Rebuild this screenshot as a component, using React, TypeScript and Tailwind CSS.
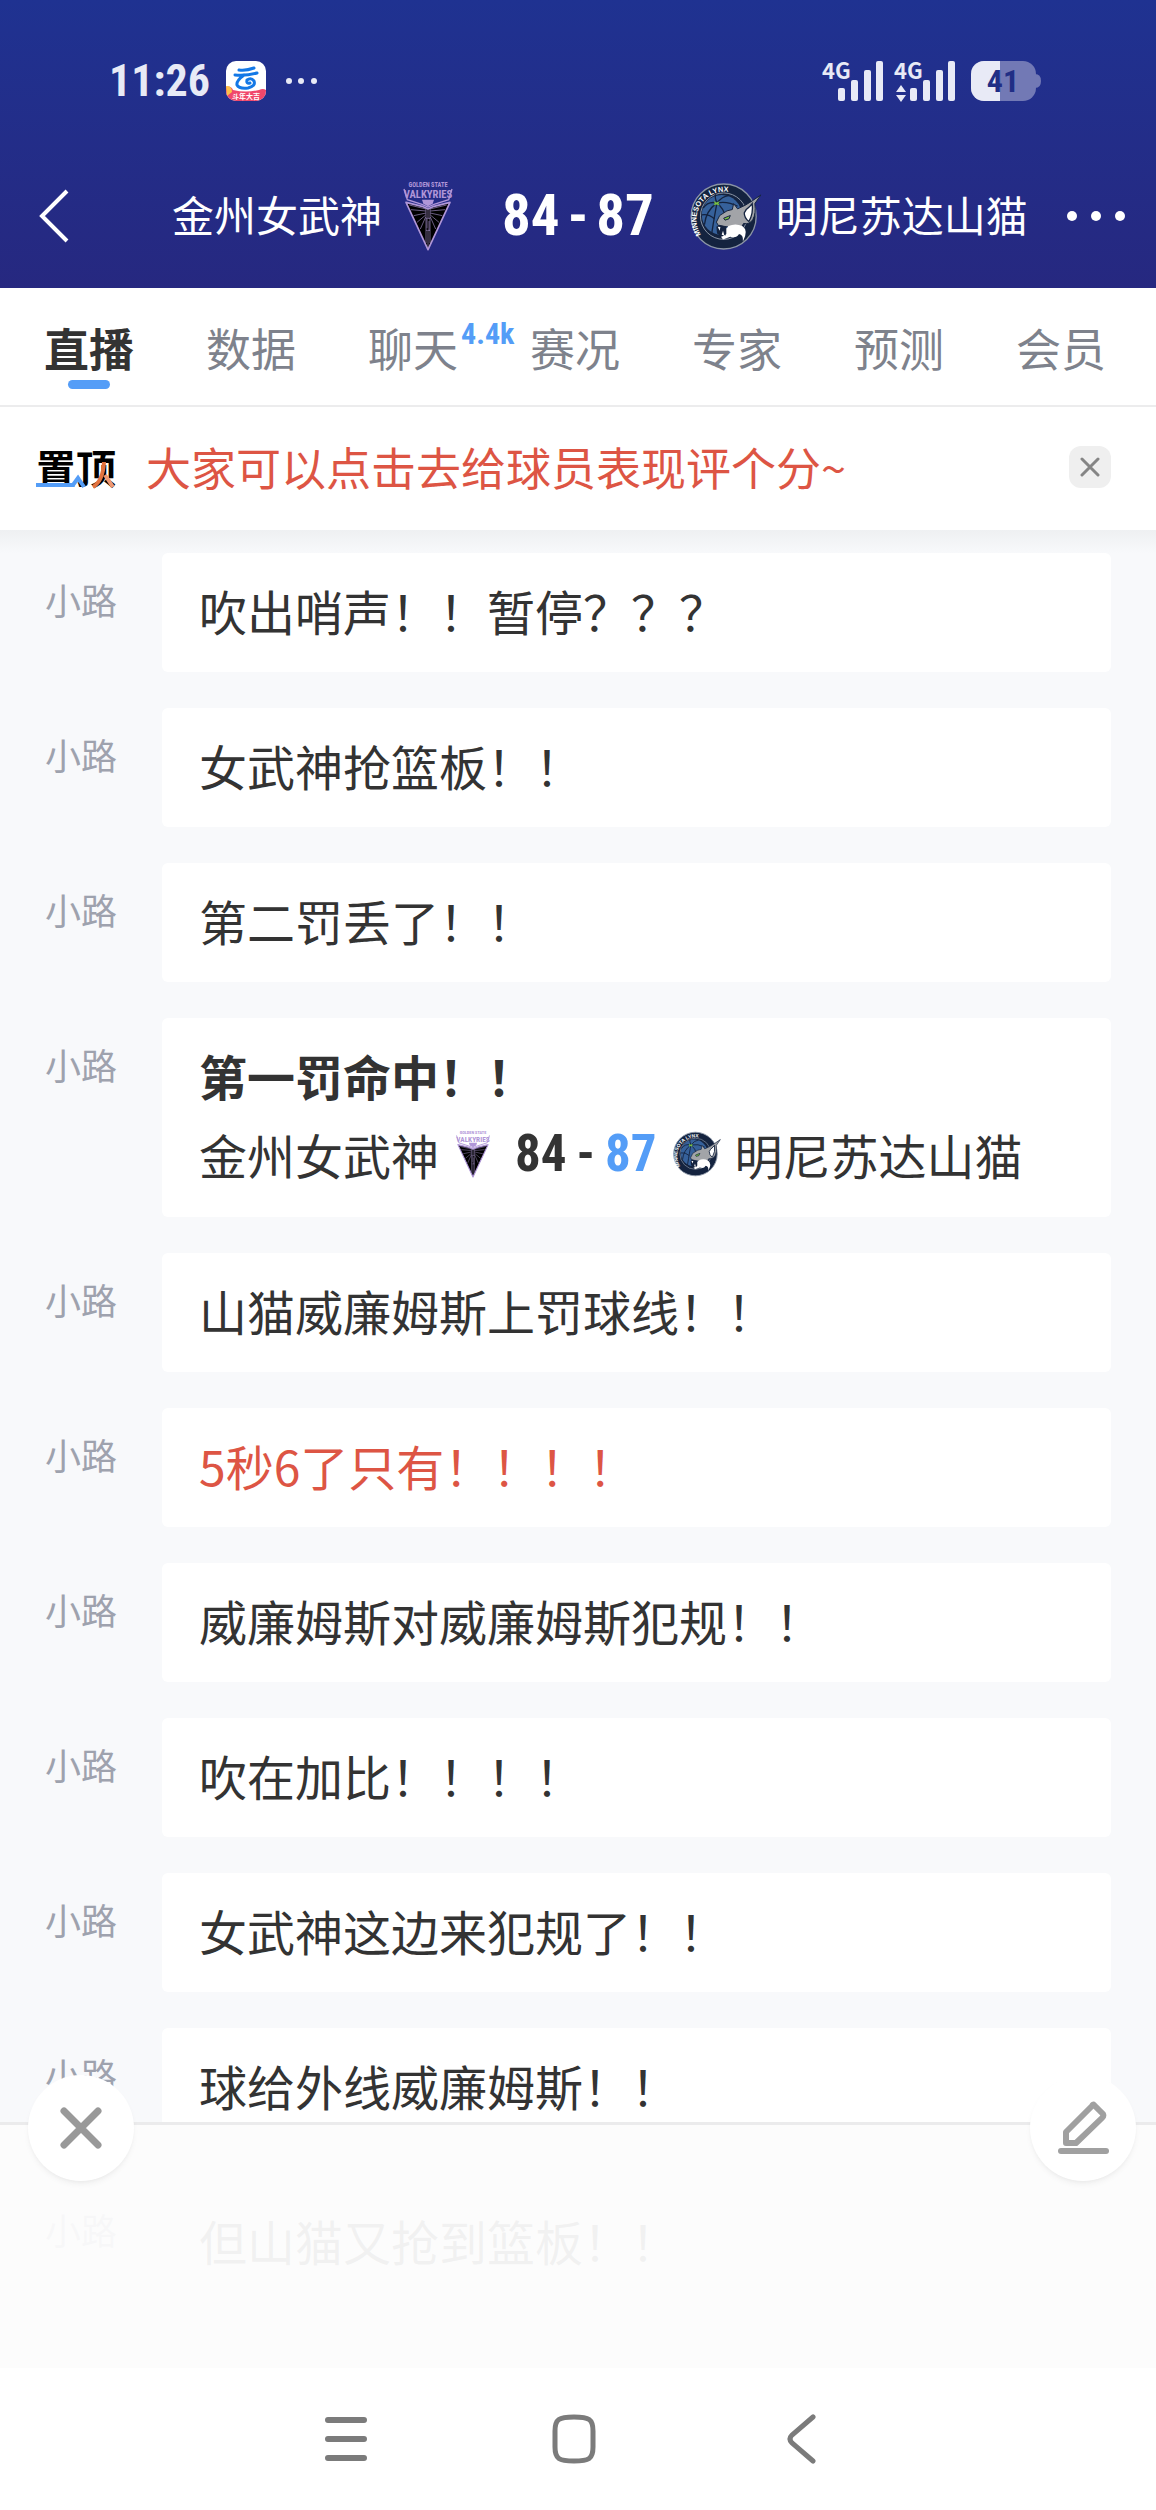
import React from 'react';
import { clsx } from 'clsx';

type Comment = {
  id: number;
  text: string;
  tone?: 'bold' | 'red';
  score?: { home: number; away: number };
};

const HOME_TEAM = '金州女武神';
const AWAY_TEAM = '明尼苏达山猫';

const tabs = [
  { name: '直播' },
  { name: '数据' },
  { name: '聊天', count: '4.4k' },
  { name: '赛况' },
  { name: '专家' },
  { name: '预测' },
  { name: '会员' },
];

const comments: Comment[] = [
  { id: 11, text: '吹出哨声！！暂停？？？' },
  { id: 10, text: '女武神抢篮板！！' },
  { id: 9, text: '第二罚丢了！！' },
  { id: 8, text: '第一罚命中！！', tone: 'bold', score: { home: 84, away: 87 } },
  { id: 7, text: '山猫威廉姆斯上罚球线！！' },
  { id: 6, text: '5秒6了只有！！！！', tone: 'red' },
  { id: 5, text: '威廉姆斯对威廉姆斯犯规！！' },
  { id: 4, text: '吹在加比！！！！' },
  { id: 3, text: '女武神这边来犯规了！！' },
  { id: 2, text: '球给外线威廉姆斯！！' },
  { id: 1, text: '但山猫又抢到篮板！！' },
];

const ValkyriesLogo: React.FC<{ className?: string }> = ({ className }) => (
  <svg viewBox="0 0 156 210" className={className} aria-hidden="true">
    <g fill="#b096d8" fontFamily="'Roboto Condensed', Roboto, sans-serif" fontWeight="700" textAnchor="middle">
      <text x="78" y="18" fontSize="19">GOLDEN STATE</text>
      <text x="78" y="52" fontSize="32">VALKYRIES</text>
    </g>
    <path d="M6 24 L16 56 L60 70 L78 78 L96 70 L140 56 L150 24" fill="none" stroke="#b096d8" strokeWidth="4" />
    <path d="M60 56 H96 L92 68 L78 76 L64 68 Z" fill="#b096d8" />
    <path d="M12 64 L60 76 L78 84 L96 76 L144 64 L78 206 Z" fill="#000" stroke="#b096d8" strokeWidth="5" strokeLinejoin="round" />
    <g stroke="#a08cc4" strokeWidth="2" fill="none">
      <path d="M72 84 L22 72 M72 90 L27 86 M72 96 L35 104 M71 102 L45 124 M71 108 L55 144" />
      <path d="M84 84 L134 72 M84 90 L129 86 M84 96 L121 104 M85 102 L111 124 M85 108 L101 144" />
      <path d="M72 80 V186 M84 80 V186 M78 80 V112 M72 112 H84 M75 114 V142 M81 120 V150 M72 148 H84 M78 150 V200" />
    </g>
  </svg>
);

const LynxLogo: React.FC<{ className?: string; ringId: string }> = ({ className, ringId }) => (
  <svg viewBox="17 16 216 202" className={className} aria-hidden="true">
    <defs>
      <path id={ringId} d="M50 172 A80 80 0 1 1 190 80" />
    </defs>
    <circle cx="118" cy="117" r="98" fill="#14233f" stroke="#8b95a5" strokeWidth="4" />
    <circle cx="118" cy="116" r="70" fill="#14233f" stroke="#8b95a5" strokeWidth="3" />
    <circle cx="112" cy="112" r="60" fill="#36619b" />
    <g fill="none" stroke="#14233f" strokeWidth="4">
      <path d="M98 76 Q70 70 56 92 M98 76 Q64 100 60 142 M98 76 Q92 104 82 168 M98 76 Q118 92 124 120 M98 76 Q130 70 160 86 M98 76 Q90 60 94 50 M98 76 Q114 56 132 54" />
      <path d="M52 112 Q72 108 90 124" />
    </g>
    <path d="M88 70 L96 75 L106 71 L102 78 L106 84 L96 81 L88 84 L91 77 Z" fill="#79c142" />
    {/* head, ear, then the jaw and fur */}
    <path
      d="M106 114 L128 100 L144 96 L148 78 L160 94 Q184 84 204 70 L230 52 L212 78 Q216 108 206 126 Q196 142 178 138 L170 152 L128 148 L102 144 L96 134 Z"
      fill="#a2a4a8"
      stroke="#14233f"
      strokeWidth="3"
    />
    <path d="M186 96 Q200 84 204 78 Q208 108 194 132 Q180 122 180 106 Z" fill="#fff" stroke="#14233f" strokeWidth="4" />
    <path
      d="M132 146 Q154 136 174 146 Q194 160 176 192 Q178 172 164 170 Q156 184 138 178 L116 186 L110 178 L112 170 L124 174 L124 162 L112 156 L128 152 Z"
      fill="#fff"
    />
    <path d="M96 148 L104 142 L126 148 L126 170 L112 178 L98 168 Z" fill="#14233f" />
    <path d="M100 148 L106 160 L108 149 Z M112 172 L116 160 L120 174 Z" fill="#fff" />
    <path d="M118 122 L138 114 L134 124 L122 128 Z" fill="#79c142" stroke="#14233f" strokeWidth="3" />
    <text fill="#fff" fontFamily="'Liberation Sans', sans-serif" fontWeight="700" fontSize="22">
      <textPath href={`#${ringId}`}>MINNESOTA LYNX</textPath>
    </text>
  </svg>
);

const SignalBars: React.FC<{ active?: boolean }> = ({ active }) => (
  <div className="relative h-[42px] w-[62px]">
    <span className="absolute -top-px left-0 text-[22px] leading-5 font-bold">4G</span>
    <svg viewBox="0 0 62 42" className="size-full" fill="currentColor" aria-hidden="true">
      <rect x="16" y="28" width="7" height="13" rx="2" />
      <rect x="29" y="20" width="7" height="21" rx="2" />
      <rect x="42" y="10" width="7" height="31" rx="2" />
      <rect x="54" y="1" width="7" height="40" rx="2" />
      {active && <path d="M7 25 L12 32 H2 Z M2 35 H12 L7 42 Z" />}
    </svg>
  </div>
);

const StatusBar: React.FC = () => (
  <div className="flex h-[162px] items-center justify-between pr-[115px] pl-[109px] text-[#e8eaf6]">
    <div className="flex items-center">
      <span className="font-['Roboto_Condensed',Roboto] text-[44px] leading-[46px] font-bold">11:26</span>
      <svg viewBox="0 0 40 40" className="ml-4 size-10" aria-hidden="true">
        <defs>
          <clipPath id="app-icon">
            <rect width="40" height="40" rx="10" />
          </clipPath>
        </defs>
        <g clipPath="url(#app-icon)">
          <rect width="40" height="40" fill="#fff" />
          <path d="M0 26 Q5 24 7 29 Q20 32 33 29 Q37 27 40 29 V40 H0 Z" fill="#f0476b" />
          <path d="M0 25 Q6 24 6 31 L1 35 Z" fill="#fbc04a" />
          <path
            d="M13 9 Q20 10 28 7 M9 14 Q20 15 31 12 M18 14 Q10 20 11 24 Q13 28 22 27 Q30 25 28 20 Q25 16 21 19 Q20 23 24 22"
            fill="none"
            stroke="#1478e6"
            strokeWidth="3"
            strokeLinecap="round"
          />
          <text x="20" y="38" fill="#fff" fontSize="7" fontWeight="700" textAnchor="middle">斗年大吉</text>
        </g>
      </svg>
      <svg viewBox="0 0 34 8" className="ml-[18px] h-2 w-[34px]" fill="currentColor" aria-hidden="true">
        <circle cx="5" cy="4" r="3" />
        <circle cx="17" cy="4" r="3" />
        <circle cx="30" cy="4" r="3" />
      </svg>
    </div>
    <div className="flex items-center">
      <SignalBars />
      <div className="ml-2.5">
        <SignalBars active />
      </div>
      <div className="relative ml-[15px] h-10 w-[70px]">
        <svg viewBox="0 0 70 40" className="size-full" aria-hidden="true">
          <defs>
            <clipPath id="battery">
              <rect width="65" height="40" rx="13" />
            </clipPath>
          </defs>
          <g clipPath="url(#battery)">
            <rect width="65" height="40" fill="#7279b5" />
            <rect width="29" height="40" fill="#e8eaf6" />
          </g>
          <path d="M64 13 Q70 13 70 20 Q70 27 64 27 Z" fill="#7279b5" />
        </svg>
        <span className="absolute inset-y-0 left-0 flex w-16 items-center justify-center font-['Roboto_Condensed',Roboto] text-[32px] font-bold text-[#212e85]">
          41
        </span>
      </div>
    </div>
  </div>
);

const ScoreHeader: React.FC = () => (
  <header className="bg-linear-to-b from-[#1f3291] to-[#262880]">
    <StatusBar />
    <div className="flex h-[126px] items-start pt-6 pr-[26px] pl-9 text-white">
      <button type="button" aria-label="返回" className="flex h-[60px] w-10 items-center">
        <svg viewBox="0 0 36 60" className="h-[60px] w-9" fill="none" stroke="currentColor" strokeWidth="4">
          <path d="M31 5 L6 30 L31 55" />
        </svg>
      </button>
      <div className="flex h-[60px] flex-1 items-center pl-24">
        <span className="pb-1 text-[42px] leading-[60px]">{HOME_TEAM}</span>
        <ValkyriesLogo className="ml-5 h-[70px] w-[52px]" />
        <div className="mr-9 ml-12 flex gap-2 font-['Roboto_Condensed',Roboto] text-[57px] leading-[60px] font-bold">
          <span>84</span>
          <span>-</span>
          <span>87</span>
        </div>
        <LynxLogo ringId="ring-header" className="h-[67px] w-[72px]" />
        <span className="ml-3.5 pb-1 text-[42px] leading-[60px]">{AWAY_TEAM}</span>
      </div>
      <button type="button" aria-label="更多" className="flex h-[60px] items-center">
        <svg viewBox="0 0 68 12" className="h-3 w-[68px]" fill="currentColor">
          <circle cx="10" cy="6" r="5" />
          <circle cx="34" cy="6" r="5" />
          <circle cx="58" cy="6" r="5" />
        </svg>
      </button>
    </div>
  </header>
);

const TabBar: React.FC = () => (
  <nav className="flex h-[119px] border-b-2 border-[#ececed] bg-white pr-3.5 pl-2">
    {tabs.map((tab, index) => (
      <button
        key={tab.name}
        type="button"
        className={clsx(
          'relative flex flex-1 flex-col items-center pt-8 text-[45px] leading-[56px]',
          index === 0 ? 'font-bold text-[#333]' : 'text-[#7e828c]'
        )}
      >
        <span>{tab.name}</span>
        {index === 0 && <span className="mt-1 h-[9px] w-[42px] rounded-full bg-[#549df7]" />}
        {tab.count && (
          <span className="absolute top-[26px] left-[129px] font-['Roboto_Condensed',Roboto] text-[30px] leading-10 font-bold text-[#549df7]">
            {tab.count}
          </span>
        )}
      </button>
    ))}
  </nav>
);

const PinnedNotice: React.FC = () => (
  <div className="flex h-[123px] items-center bg-white pr-[45px] pb-1 pl-9">
    <div className="relative w-20 text-[40px] leading-[44px] font-bold text-black">
      置顶
      <svg viewBox="0 0 80 44" className="absolute inset-0 h-11 w-20" fill="none" aria-hidden="true">
        <path d="M0 40 H37 L42 33 L48 42" stroke="#549df7" strokeWidth="4" />
        <path d="M57 42 Q67 36 68 17" stroke="#e2733f" strokeWidth="4" />
        <path d="M69 30 L77 42" stroke="#ee9873" strokeWidth="4" />
      </svg>
    </div>
    <p className="ml-[30px] flex-1 text-[45px] leading-[56px] text-[#dd5544]">大家可以点击去给球员表现评个分~</p>
    <button type="button" aria-label="关闭" className="flex size-[42px] items-center justify-center rounded-xl bg-[#efefef]">
      <svg viewBox="0 0 20 20" className="size-5" stroke="#858585" strokeWidth="3" strokeLinecap="round">
        <path d="M2 2 L18 18 M18 2 L2 18" />
      </svg>
    </button>
  </div>
);

const ScoreLine: React.FC<{ home: number; away: number }> = ({ home, away }) => (
  <div className="flex h-20 items-center">
    <span>{HOME_TEAM}</span>
    <ValkyriesLogo className="ml-4 h-12 w-9" />
    <div className="mr-4 ml-6 flex gap-2.5 font-['Roboto_Condensed',Roboto] text-[51px] font-bold">
      <span>{home}</span>
      <span>-</span>
      <span className="text-[#549df7]">{away}</span>
    </div>
    <LynxLogo ringId="ring-comment" className="h-[46px] w-12" />
    <span className="ml-3.5">{AWAY_TEAM}</span>
  </div>
);

const CommentRow: React.FC<{ comment: Comment }> = ({ comment }) => (
  <li className="flex items-start pr-[45px] pl-[45px]">
    <span className="w-[117px] shrink-0 pt-[26px] text-[36px] leading-10 text-[#9ea2ae]">小路</span>
    <div className="flex-1 rounded-md bg-white pt-[18px] pb-[23px] pl-[37px] text-[48px] leading-[78px] text-[#333]">
      <p
        className={clsx(
          comment.tone === 'bold' && 'font-bold',
          comment.tone === 'red' && 'text-[#dd5544]'
        )}
      >
        {comment.text}
      </p>
      {comment.score && <ScoreLine home={comment.score.home} away={comment.score.away} />}
    </div>
  </li>
);

// Translucent input area that floats over the end of the feed
const FeedFooter: React.FC = () => (
  <div className="absolute inset-x-0 bottom-0 h-[246px] border-t-3 border-[#ebebec] bg-[#fcfcfc]/95">
    <div className="-mt-[50px] flex justify-between pr-5 pl-7">
      <button type="button" aria-label="收起" className="flex size-[106px] items-center justify-center rounded-full bg-white shadow-md shadow-black/5">
        <svg viewBox="0 0 44 44" className="size-11" stroke="#999" strokeWidth="7" strokeLinecap="round">
          <path d="M5 5 L39 39 M39 5 L5 39" />
        </svg>
      </button>
      <button type="button" aria-label="发表评论" className="flex size-[106px] items-center justify-center rounded-full bg-white shadow-md shadow-black/5">
        <svg viewBox="0 0 52 54" className="h-[54px] w-[52px]" fill="none" stroke="#a0a0a0" strokeWidth="6" strokeLinecap="round" strokeLinejoin="round">
          <path d="M37 4 L46 13 Q47 15 45 17 L19 42 H9 V31 L35 5 Q36 3 37 4 Z" />
          <path d="M4 50 H49" />
        </svg>
      </button>
    </div>
  </div>
);

const SystemNav: React.FC = () => (
  <nav className="flex h-[142px] items-center justify-center gap-[140px] bg-white pr-2 text-[#7b7b7b]">
    <button type="button" aria-label="最近任务" className="flex size-[88px] items-center justify-center">
      <svg viewBox="0 0 44 50" className="h-[50px] w-11" stroke="currentColor" strokeWidth="6" strokeLinecap="round">
        <path d="M4 6 H40 M4 25 H40 M4 44 H40" />
      </svg>
    </button>
    <button type="button" aria-label="主屏幕" className="flex size-[88px] items-center justify-center">
      <svg viewBox="0 0 44 50" className="h-[50px] w-11" fill="none" stroke="currentColor" strokeWidth="5">
        <path d="M22 3 C37 3 41 5 41 17 V33 C41 45 37 47 22 47 C7 47 3 45 3 33 V17 C3 5 7 3 22 3 Z" />
      </svg>
    </button>
    <button type="button" aria-label="返回上一页" className="flex size-[88px] items-center justify-center">
      <svg viewBox="0 0 44 50" className="h-[50px] w-11" fill="none" stroke="currentColor" strokeWidth="5" strokeLinecap="round">
        <path d="M33 3 L12 21 Q8 25 12 29 L33 47" />
      </svg>
    </button>
  </nav>
);

const App: React.FC = () => (
  <div className="bg-[#f8f9fb] font-['Noto_Sans_CJK_SC',sans-serif]">
    <ScoreHeader />
    <TabBar />
    <PinnedNotice />
    <main className="relative">
      <div className="h-[23px] bg-linear-to-b from-[#eef0f2] to-[#f8f9fb]" />
      <ul className="flex flex-col gap-9 pb-[66px]">
        {comments.map((comment) => (
          <CommentRow key={comment.id} comment={comment} />
        ))}
      </ul>
      <FeedFooter />
    </main>
    <SystemNav />
  </div>
);

export default App;
